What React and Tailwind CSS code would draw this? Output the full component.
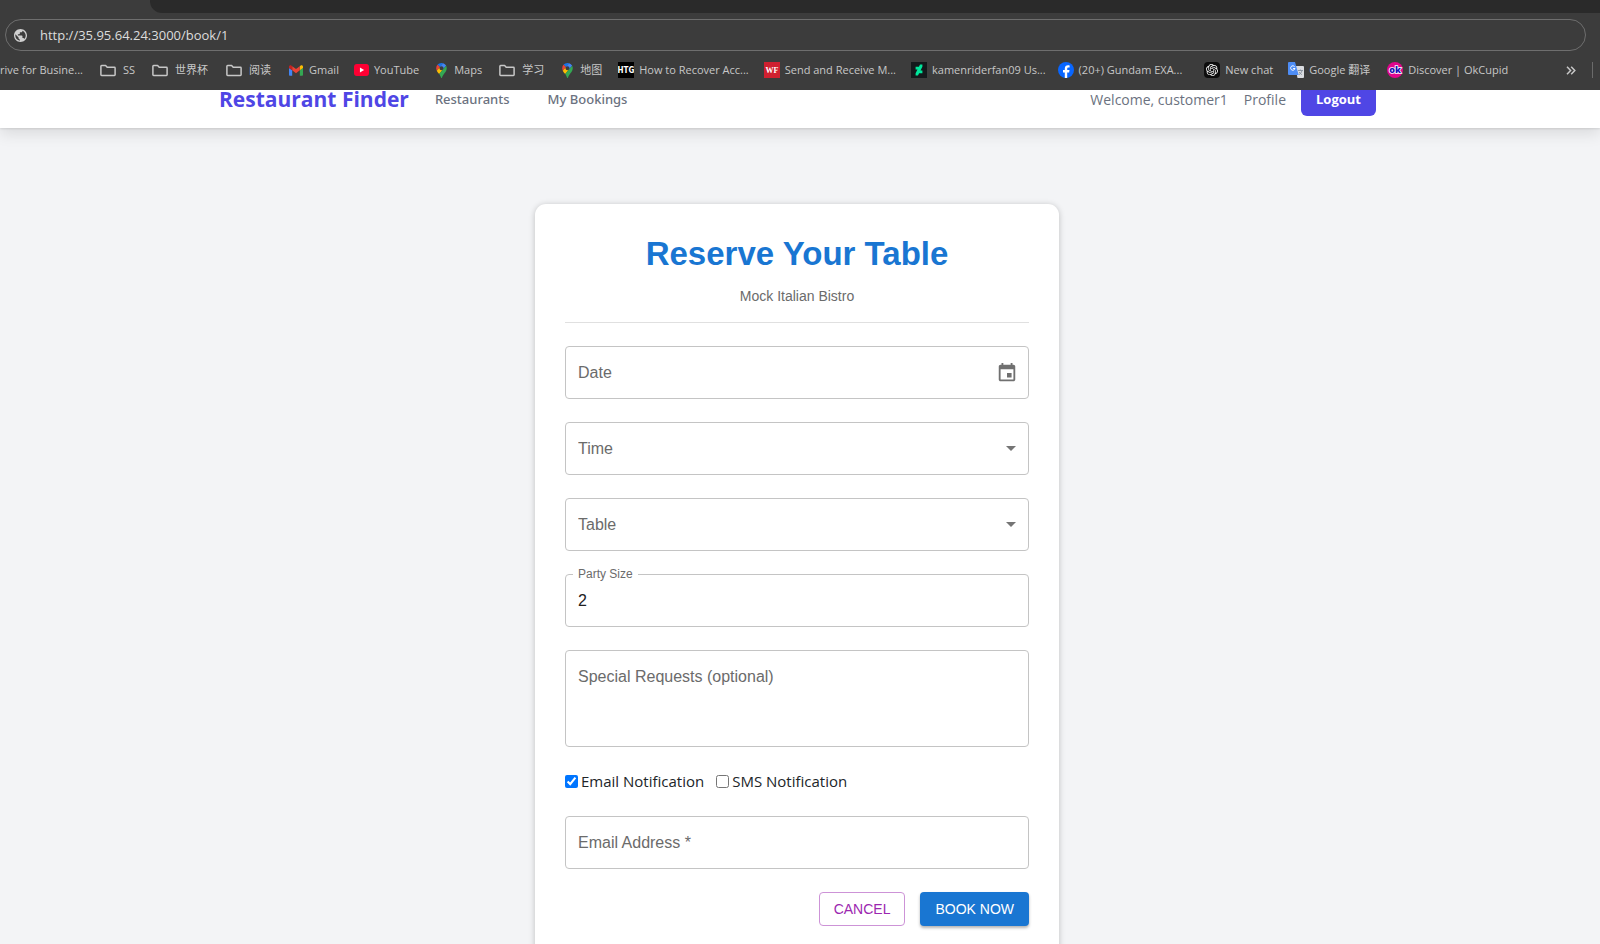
import React from "react";

const ui = "font-['Open_Sans','Noto_Sans_CJK_SC',sans-serif]";
const arial = "font-['Liberation_Sans',Arial,sans-serif]";

function Folder() {
  return (
    <svg width="16" height="13" viewBox="0 0 16 13" fill="none" stroke="#c7c7c7" strokeWidth="1.5" strokeLinejoin="round" className="shrink-0">
      <path d="M1.6 1.5h4l1.6 1.7h7.2a.7.7 0 0 1 .7.7v6.9a.7.7 0 0 1-.7.7H1.6a.7.7 0 0 1-.7-.7V2.2a.7.7 0 0 1 .7-.7z" />
    </svg>
  );
}

function Gmail() {
  return (
    <svg width="14" height="11" viewBox="52 42 88 66" className="shrink-0">
      <path fill="#4285f4" d="M58 108h14V74L52 59v43c0 3.32 2.69 6 6 6" />
      <path fill="#34a853" d="M120 108h14c3.32 0 6-2.69 6-6V59l-20 15" />
      <path fill="#fbbc04" d="M120 48v26l20-15v-8c0-7.42-8.47-11.65-14.4-7.2" />
      <path fill="#ea4335" d="M72 74V48l24 18 24-18v26L96 92" />
      <path fill="#c5221f" d="M52 51v8l20 15V48l-5.6-4.2c-5.94-4.45-14.4-.22-14.4 7.2" />
    </svg>
  );
}

function YouTube() {
  return (
    <svg width="15" height="12" viewBox="0 0 16 12" preserveAspectRatio="none" className="shrink-0">
      <rect width="16" height="12" rx="3" fill="#ff0033" />
      <path d="M6.3 3.4v5.2L10.8 6z" fill="#fff" />
    </svg>
  );
}

function MapPin() {
  return (
    <svg width="11" height="15" viewBox="0 0 92.3 132.3" className="shrink-0">
      <path fill="#1a73e8" d="M60.2 2.2C55.8.8 51 0 46.1 0 32 0 19.3 6.4 10.8 16.5l21.8 18.3z" />
      <path fill="#ea4335" d="M10.8 16.5C4.1 24.5 0 34.9 0 46.1c0 8.7 1.7 15.7 4.6 22l28-33.3z" />
      <path fill="#4285f4" d="M46.2 28.5c9.8 0 17.7 7.9 17.7 17.7 0 4.3-1.6 8.3-4.2 11.4 0 0 13.9-16.6 27.5-32.7-5.6-10.8-15.3-19-27-22.7L32.6 34.8c3.3-3.8 8.1-6.3 13.6-6.3" />
      <path fill="#fbbc04" d="M46.2 63.8c-9.8 0-17.7-7.9-17.7-17.7 0-4.3 1.5-8.3 4.1-11.3l-28 33.3c4.8 10.6 12.8 19.2 21 29.9l34.1-40.5c-3.3 3.9-8.1 6.3-13.5 6.3" />
      <path fill="#34a853" d="M59.1 109.2c15.4-24.1 33.3-35 33.3-63 0-7.7-1.9-14.9-5.2-21.3L25.6 98c2.6 3.4 5.3 7.3 7.9 11.3 9.4 14.5 6.8 23.1 12.8 23.1s3.4-8.7 12.8-23.2" />
    </svg>
  );
}

function Htg() {
  return (
    <svg width="16" height="16" viewBox="0 0 16 16" className="shrink-0">
      <rect width="16" height="16" fill="#000" />
      <text x="8" y="11" textAnchor="middle" fontSize="8" fontWeight="700" fill="#fff" className="font-['Liberation_Sans_Narrow','DejaVu_Sans_Condensed',sans-serif]">HTG</text>
    </svg>
  );
}

function Wf() {
  return (
    <svg width="16" height="16" viewBox="0 0 16 16" className="shrink-0">
      <rect width="16" height="16" fill="#cf2030" />
      <text x="8" y="11" textAnchor="middle" fontSize="8" fontWeight="700" fill="#fff" className="font-['Liberation_Serif',serif]">WF</text>
    </svg>
  );
}

function DeviantArt() {
  return (
    <svg width="16" height="16" viewBox="0 0 16 16" className="shrink-0">
      <rect width="16" height="16" fill="#14191c" />
      <path fill="#00e59b" d="M11.4 2.5H9.2L8.9 2.8 7.9 4.8H4.6V7.6H6.5L4.6 11.2V13.5H6.8L7.1 13.2 8.1 11.2H11.4V8.4H9.5L11.4 4.8z" />
    </svg>
  );
}

function Facebook() {
  return (
    <svg width="16" height="16" viewBox="0 0 16 16" className="shrink-0">
      <circle cx="8" cy="8" r="8" fill="#0866ff" />
      <path fill="#fff" d="M6.8 16V10.4H5V8h1.8V6.7c0-2.4 1.2-3.5 3.3-3.5.5 0 1.1.1 1.5.2v2h-1c-1 0-1.4.4-1.4 1.3V8h2.3l-.4 2.4H9.2V16z" />
    </svg>
  );
}

function ChatGpt() {
  return (
    <svg width="16" height="16" viewBox="0 0 16 16" className="shrink-0">
      <rect width="16" height="16" rx="4" fill="#0d0d0d" />
      <g transform="translate(2 2) scale(.5)" fill="#fff">
        <path d="M22.2819 9.8211a5.9847 5.9847 0 0 0-.5157-4.9108 6.0462 6.0462 0 0 0-6.5098-2.9A6.0651 6.0651 0 0 0 4.9807 4.1818a5.9847 5.9847 0 0 0-3.9977 2.9 6.0462 6.0462 0 0 0 .7427 7.0966 5.98 5.98 0 0 0 .511 4.9107 6.051 6.051 0 0 0 6.5146 2.9001A5.9847 5.9847 0 0 0 13.2599 24a6.0557 6.0557 0 0 0 5.7718-4.2058 5.9894 5.9894 0 0 0 3.9977-2.9001 6.0557 6.0557 0 0 0-.7475-7.0729zm-9.022 12.6081a4.4755 4.4755 0 0 1-2.8764-1.0408l.1419-.0804 4.7783-2.7582a.7948.7948 0 0 0 .3927-.6813v-6.7369l2.02 1.1686a.071.071 0 0 1 .038.052v5.5826a4.504 4.504 0 0 1-4.4945 4.4944zm-9.6607-4.1254a4.4708 4.4708 0 0 1-.5346-3.0137l.142.0852 4.783 2.7582a.7712.7712 0 0 0 .7806 0l5.8428-3.3685v2.3324a.0804.0804 0 0 1-.0332.0615L9.74 19.9502a4.4992 4.4992 0 0 1-6.1408-1.6464zM2.3408 7.8956a4.485 4.485 0 0 1 2.3655-1.9728V11.6a.7664.7664 0 0 0 .3879.6765l5.8144 3.3543-2.0201 1.1685a.0757.0757 0 0 1-.071 0l-4.8303-2.7865A4.504 4.504 0 0 1 2.3408 7.872zm16.5963 3.8558L13.1038 8.364 15.1192 7.2a.0757.0757 0 0 1 .071 0l4.8303 2.7913a4.4944 4.4944 0 0 1-.6765 8.1042v-5.6772a.79.79 0 0 0-.407-.667zm2.0107-3.0231l-.142-.0852-4.7735-2.7818a.7759.7759 0 0 0-.7854 0L9.409 9.2297V6.8974a.0662.0662 0 0 1 .0284-.0615l4.8303-2.7866a4.4992 4.4992 0 0 1 6.6802 4.66zM8.3065 12.863l-2.02-1.1638a.0804.0804 0 0 1-.038-.0567V6.0742a4.4992 4.4992 0 0 1 7.3757-3.4537l-.142.0805L8.704 5.459a.7948.7948 0 0 0-.3927.6813zm1.0976-2.3654l2.602-1.4998 2.6069 1.4998v2.9994l-2.5974 1.4997-2.6067-1.4997Z" />
      </g>
    </svg>
  );
}

function Translate() {
  return (
    <svg width="16" height="16" viewBox="0 0 16 16" className="shrink-0">
      <path d="M7 4h8a1 1 0 0 1 1 1v10a1 1 0 0 1-1 1H9.5z" fill="#dadce0" />
      <path d="M10 8.5h5M12.4 7.5v1M14 8.7c-.6 2-1.8 3.2-3 4M11.2 10c.6 1.2 1.6 2 2.7 2.7" stroke="#7b8694" strokeWidth=".8" fill="none" />
      <path d="M1 0h6l3.7 13H1a1 1 0 0 1-1-1V1a1 1 0 0 1 1-1z" fill="#4e8df5" />
      <path d="M6.6 4.7A2.2 2.2 0 1 0 7 6.5H5.1" stroke="#fff" strokeWidth="1" fill="none" />
    </svg>
  );
}

function OkCupid() {
  return (
    <svg width="16" height="16" viewBox="0 0 16 16" className="shrink-0">
      <circle cx="8" cy="8" r="8" fill="#e0068c" />
      <text x="8" y="11" textAnchor="middle" fontSize="9" fontWeight="800" fill="#1a0fb4" stroke="#fff" strokeWidth="1.6" paintOrder="stroke" className="font-['Open_Sans',sans-serif]">ok</text>
    </svg>
  );
}

const bookmarks = [
  { label: "SS", icon: Folder, gap: "ml-[18px] gap-[7px]" },
  { label: "世界杯", icon: Folder, gap: "ml-[17px] gap-[7px]" },
  { label: "阅读", icon: Folder, gap: "ml-[18px] gap-[7px]" },
  { label: "Gmail", icon: Gmail, gap: "ml-[18px] gap-1.5" },
  { label: "YouTube", icon: YouTube, gap: "ml-[15px] gap-[5px]" },
  { label: "Maps", icon: MapPin, gap: "ml-[17px] gap-[7px]" },
  { label: "学习", icon: Folder, gap: "ml-[17px] gap-[7px]" },
  { label: "地图", icon: MapPin, gap: "ml-[18px] gap-[7px]" },
  { label: "How to Recover Acc...", icon: Htg, gap: "ml-4 gap-[5px]" },
  { label: "Send and Receive M...", icon: Wf, gap: "ml-[15px] gap-[5px]" },
  { label: "kamenriderfan09 Us...", icon: DeviantArt, gap: "ml-[15px] gap-[5px]" },
  { label: "(20+) Gundam EXA...", icon: Facebook, gap: "ml-3 gap-[5px]" },
  { label: "New chat", icon: ChatGpt, gap: "ml-[22px] gap-[5px]" },
  { label: "Google 翻译", icon: Translate, gap: "ml-[15px] gap-[5px]" },
  { label: "Discover | OkCupid", icon: OkCupid, gap: "ml-[17px] gap-[5px]" },
];

function BrowserChrome() {
  return (
    <div className={`relative z-10 h-[90px] bg-[#3c3c3c] ${ui}`}>
      <div className="flex h-[13px] pl-[150px]">
        <div className="grow rounded-bl-xl bg-[#2a2a2a]" />
      </div>
      <div className="px-[5px] pt-1.5">
        <div className="mr-[9px] flex h-8 items-center gap-3 rounded-full border border-[#6e6e6e] pl-2">
          <svg width="13" height="13" viewBox="2 2 20 20" className="shrink-0" fill="#d0d0d0">
            <path d="M12 2C6.48 2 2 6.48 2 12s4.48 10 10 10 10-4.48 10-10S17.52 2 12 2zm-1 17.93c-3.95-.49-7-3.85-7-7.93 0-.62.08-1.21.21-1.79L9 15v1c0 1.1.9 2 2 2v1.93zm6.9-2.54c-.26-.81-1-1.39-1.9-1.39h-1v-3c0-.55-.45-1-1-1H8v-2h2c.55 0 1-.45 1-1V7h2c1.1 0 2-.9 2-2v-.41c2.93 1.19 5 4.06 5 7.41 0 2.08-.8 3.97-2.1 5.39z" />
          </svg>
          <input
            aria-label="Address"
            defaultValue="http://35.95.64.24:3000/book/1"
            className="min-w-0 grow bg-transparent pt-px pl-px text-[13px] text-[#dcdcdc] outline-none"
          />
        </div>
      </div>
      <nav className="flex h-[38px] items-center overflow-hidden text-[11px] text-[#c7c7c7]">
        <a href="#drive" className="-ml-2 w-[90px] shrink-0 whitespace-nowrap">Drive for Busine...</a>
        {bookmarks.map(({ label, icon: Icon, gap }) => (
          <a key={label} href="#bookmark" className={`flex shrink-0 items-center whitespace-nowrap ${gap}`}>
            <Icon />
            {label}
          </a>
        ))}
        <button type="button" aria-label="More bookmarks" className="ml-auto mr-4">
          <svg width="10" height="9" viewBox="0 0 10 9" fill="none" stroke="#c7c7c7" strokeWidth="1.5">
            <path d="M1 .8 4.6 4.5 1 8.2M5.2.8l3.6 3.7-3.6 3.7" />
          </svg>
        </button>
        <div className="mr-[7px] h-4 w-px bg-[#6a6a6a]" />
      </nav>
    </div>
  );
}

function SiteHeader() {
  return (
    <header className={`relative -mt-[22px] h-[60px] bg-white pt-[3px] shadow-[0_1px_2px_rgba(0,0,0,0.1),0_6px_14px_rgba(0,0,0,0.1)] ${ui}`}>
      <div className="mx-auto flex h-full max-w-[1162px] items-center text-[#6b7280]">
        <a href="#home" className="text-[21px] font-bold text-[#4f46e5]">Restaurant Finder</a>
        <a href="#restaurants" className="ml-[26px] font-['Noto_Sans','Open_Sans',sans-serif] text-[13px] font-medium">Restaurants</a>
        <a href="#bookings" className="ml-[38px] font-['Noto_Sans','Open_Sans',sans-serif] text-[13px] font-medium">My Bookings</a>
        <span className="ml-auto text-sm">Welcome, customer1</span>
        <a href="#profile" className="ml-4 text-sm">Profile</a>
        <button type="button" className="ml-[15px] mr-[5px] h-8 rounded-md bg-[#4f46e5] px-[15px] text-[13px] font-bold text-white">Logout</button>
      </div>
    </header>
  );
}

const box = "rounded border border-[#c4c4c4] text-base text-[#212121] outline-none placeholder:text-[#6b6b6b] placeholder:opacity-100";

function SelectField({ label, options }) {
  return (
    <div className="grid items-center">
      <select
        aria-label={label}
        defaultValue=""
        className={`col-start-1 row-start-1 h-[53px] w-full appearance-none bg-white px-3 text-[#6b6b6b]! ${box}`}
      >
        <option value="">{label}</option>
        {options.map((o) => (
          <option key={o}>{o}</option>
        ))}
      </select>
      <svg width="10" height="5" viewBox="0 0 10 5" className="pointer-events-none col-start-1 row-start-1 mr-[13px] justify-self-end">
        <path d="M0 0h10L5 5z" fill="#757575" />
      </svg>
    </div>
  );
}

export default function App() {
  return (
    <div className="h-screen overflow-hidden bg-[#f3f4f6]">
      <BrowserChrome />
      <SiteHeader />
      <main className={`pt-[76px] pr-[22px] pl-4 ${arial}`}>
        <form
          onSubmit={(e) => e.preventDefault()}
          className="mx-auto flex w-full max-w-[524px] flex-col rounded-[11px] bg-white px-[30px] pb-8 shadow-[0_1px_6px_rgba(0,0,0,0.22)]"
        >
          <h1 className="pt-[30px] text-center text-[33px] leading-10 font-bold text-[#1976d2]">Reserve Your Table</h1>
          <p className="mt-3 border-b border-[#e0e0e0] pb-4 text-center text-sm leading-5 text-[#6b6b6b]">Mock Italian Bistro</p>

          <div className="mt-[23px] flex flex-col gap-[23px]">
            <div className={`flex h-[53px] items-center pl-3 pr-[10px] ${box}`}>
              <input aria-label="Date" placeholder="Date" className="min-w-0 grow outline-none placeholder:text-[#6b6b6b] placeholder:opacity-100" />
              <button type="button" aria-label="Choose date">
                <svg width="22" height="22" viewBox="0 0 24 24" fill="#707070">
                  <path d="M17 12h-5v5h5v-5zM16 1v2H8V1H6v2H5c-1.11 0-1.99.9-1.99 2L3 19c0 1.1.89 2 2 2h14c1.1 0 2-.9 2-2V5c0-1.1-.9-2-2-2h-1V1h-2zm3 18H5V8h14v11z" />
                </svg>
              </button>
            </div>
            <SelectField label="Time" options={["18:00", "19:00"]} />
            <SelectField label="Table" options={["Table 1", "Table 2"]} />
            <div className="relative">
              <input id="party" defaultValue="2" className={`block h-[53px] w-full px-3 ${box}`} />
              <label htmlFor="party" className="absolute -top-2 left-2 bg-white px-[5px] text-xs leading-4 text-[#6b6b6b]">Party Size</label>
            </div>
            <textarea
              aria-label="Special Requests (optional)"
              placeholder="Special Requests (optional)"
              className={`block h-[97px] w-full resize-none px-3 py-[14px] ${box}`}
            />
            <div className="flex h-[23px] items-center gap-3 font-['Open_Sans',sans-serif] text-[15px] text-[#212529]">
              <label className="flex items-center gap-[3px]">
                <input type="checkbox" defaultChecked className="size-[13px] accent-[#0075ff]" />
                Email Notification
              </label>
              <label className="flex items-center gap-[3px]">
                <input type="checkbox" className="size-[13px]" />
                SMS Notification
              </label>
            </div>
            <input type="email" aria-label="Email Address" placeholder="Email Address *" className={`block h-[53px] w-full px-3 ${box}`} />
            <div className="flex justify-end gap-[15px] text-sm">
              <button type="button" className="h-[34px] rounded border border-[#cd93d7] px-[14px] text-[#9c27b0]">CANCEL</button>
              <button type="submit" className="h-[34px] rounded bg-[#1976d2] px-[15px] text-white shadow-[0_2px_3px_rgba(0,0,0,0.3)]">BOOK NOW</button>
            </div>
          </div>
        </form>
      </main>
    </div>
  );
}
